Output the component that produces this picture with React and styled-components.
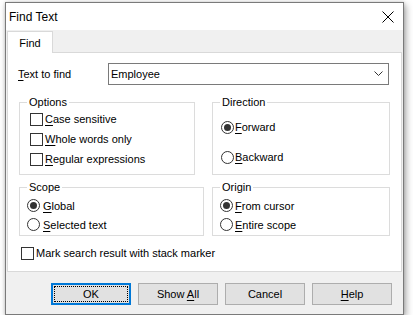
import React from 'react';
import styled, { createGlobalStyle } from 'styled-components';

const GlobalStyle = createGlobalStyle`
  html, body {
    margin: 0;
    padding: 0;
    background: #ffffff;
  }
  body {
    font-family: "Liberation Sans", Arial, sans-serif;
    font-size: 11px;
    color: #000;
  }
`;

const Window = styled.div`
  box-sizing: border-box;
  width: 399px;
  height: 313px;
  margin: 2px 0 0 5px;
  border: 1px solid #7a7a7a;
  background: #f0f0f0;
  box-shadow: 2px 3px 7px rgba(0, 0, 0, 0.35), 0 0 3px rgba(0, 0, 0, 0.15);
  display: flex;
  flex-direction: column;
`;

const TitleBar = styled.div`
  height: 27px;
  background: #ffffff;
  display: flex;
  align-items: center;
  justify-content: space-between;
  padding: 0 8px 0 3px;
  font-size: 12px;
`;

const CloseButton = styled.div`
  width: 12px;
  height: 12px;
  display: flex;
  margin-right: 1px;
`;

const Tabs = styled.div`
  display: flex;
  padding: 1px 1px 0 1px;
`;

const Tab = styled.div`
  box-sizing: border-box;
  width: 46px;
  height: 22px;
  margin-bottom: -1px;
  background: #ffffff;
  border: 1px solid #d9d9d9;
  border-bottom: none;
  display: flex;
  align-items: center;
  justify-content: center;
  padding-top: 1px;
  position: relative;
  z-index: 1;
`;

const Panel = styled.div`
  box-sizing: border-box;
  height: 220px;
  margin: 0 1px;
  background: #ffffff;
  border: 1px solid #d9d9d9;
  padding: 10px 0 0 10px;
  display: flex;
  flex-direction: column;
`;

const FindRow = styled.div`
  display: flex;
  align-items: center;
  height: 22px;
`;

const FieldLabel = styled.div`
  width: 90px;
`;

const Combo = styled.div`
  box-sizing: border-box;
  width: 281px;
  height: 22px;
  border: 1px solid #7a7a7a;
  display: flex;
  align-items: center;
  justify-content: space-between;
  padding: 0 5px 0 2px;
`;

const GroupRow = styled.div`
  display: flex;
  justify-content: space-between;
  width: 371px;
  margin: ${(p) => p.$top}px 0 0 1px;
`;

const Group = styled.fieldset`
  box-sizing: border-box;
  width: ${(p) => p.$width}px;
  margin: 0;
  padding: 0;
  border: 1px solid #dcdcdc;
  min-width: 0;
`;

const Legend = styled.legend`
  padding: 0 2px;
  margin-left: 7px;
  line-height: 14px;
  font-size: 11px;
`;

const GroupBody = styled.div`
  display: flex;
  flex-direction: column;
  padding: ${(p) => p.$pad};
`;

const Option = styled.label`
  display: flex;
  align-items: center;
  height: ${(p) => p.$h}px;
  gap: ${(p) => p.$gap}px;
`;

const CheckBox = styled.span`
  box-sizing: border-box;
  width: 13px;
  height: 13px;
  border: 1px solid #333333;
  background: #ffffff;
  flex-shrink: 0;
`;

const RadioDot = styled.span`
  box-sizing: border-box;
  width: 13px;
  height: 13px;
  border-radius: 50%;
  border: 1px solid #333333;
  background: #ffffff;
  flex-shrink: 0;
  display: flex;
  align-items: center;
  justify-content: center;

  &::after {
    content: '';
    width: 7px;
    height: 7px;
    border-radius: 50%;
    background: ${(p) => (p.$on ? '#333333' : 'transparent')};
  }
`;

const MarkRow = styled.div`
  margin: 7px 0 0 3px;
`;

const Key = styled.u`
  text-decoration-thickness: 1px;
  text-underline-offset: 2px;
`;

const ButtonBar = styled.div`
  display: flex;
  justify-content: flex-end;
  gap: 7px;
  padding: 11px 11px 0 0;
`;

const Button = styled.div`
  box-sizing: border-box;
  width: 80px;
  height: 22px;
  background: #e1e1e1;
  border: ${(p) => (p.$default ? '2px solid #0078d7' : '1px solid #adadad')};
  display: flex;
  align-items: center;
  justify-content: center;
  position: relative;

  &::after {
    content: '';
    display: ${(p) => (p.$default ? 'block' : 'none')};
    position: absolute;
    inset: 1px;
    border: 1px dotted #000;
  }
`;

const Chevron = () => (
  <svg width="9" height="6" viewBox="0 0 9 6">
    <path d="M0.5 0.5 L4.5 4.5 L8.5 0.5" fill="none" stroke="#333" strokeWidth="1" />
  </svg>
);

const CloseIcon = () => (
  <svg width="12" height="12" viewBox="0 0 12 12">
    <path d="M0.5 0.5 L11.5 11.5 M11.5 0.5 L0.5 11.5" stroke="#000" strokeWidth="1" />
  </svg>
);

const Check = ({ k, rest, h = 20, gap = 2 }) => (
  <Option $h={h} $gap={gap}>
    <CheckBox />
    <span>
      {k ? <Key>{k}</Key> : null}
      {rest}
    </span>
  </Option>
);

const Radio = ({ k, rest, on, h, gap = 2 }) => (
  <Option $h={h} $gap={gap}>
    <RadioDot $on={on} />
    <span>
      <Key>{k}</Key>
      {rest}
    </span>
  </Option>
);

export default function App() {
  return (
    <>
      <GlobalStyle />
      <Window>
        <TitleBar>
          <span>Find Text</span>
          <CloseButton>
            <CloseIcon />
          </CloseButton>
        </TitleBar>
        <Tabs>
          <Tab>Find</Tab>
        </Tabs>
        <Panel>
          <FindRow>
            <FieldLabel>
              <Key>T</Key>ext to find
            </FieldLabel>
            <Combo>
              <span>Employee</span>
              <Chevron />
            </Combo>
          </FindRow>

          <GroupRow $top={10}>
            <Group $width={176}>
              <Legend>Options</Legend>
              <GroupBody $pad="0 0 5px 10px">
                <Check k="C" rest="ase sensitive" />
                <Check k="W" rest="hole words only" />
                <Check k="R" rest="egular expressions" />
              </GroupBody>
            </Group>
            <Group $width={178}>
              <Legend>Direction</Legend>
              <GroupBody $pad="3px 0 0 8px">
                <Radio k="F" rest="orward" on h={30} gap={1} />
                <Radio k="B" rest="ackward" h={30} gap={1} />
              </GroupBody>
            </Group>
          </GroupRow>

          <GroupRow $top={5}>
            <Group $width={185}>
              <Legend>Scope</Legend>
              <GroupBody $pad="2px 0 1px 7px">
                <Radio k="G" rest="lobal" on h={19} gap={3} />
                <Radio k="S" rest="elected text" h={19} gap={3} />
              </GroupBody>
            </Group>
            <Group $width={178}>
              <Legend>Origin</Legend>
              <GroupBody $pad="2px 0 1px 7px">
                <Radio k="F" rest="rom cursor" on h={19} gap={2} />
                <Radio k="E" rest="ntire scope" h={19} gap={2} />
              </GroupBody>
            </Group>
          </GroupRow>

          <MarkRow>
            <Check rest="Mark search result with stack marker" gap={2} />
          </MarkRow>
        </Panel>
        <ButtonBar>
          <Button $default>OK</Button>
          <Button>
            <span>
              Show <Key>A</Key>ll
            </span>
          </Button>
          <Button>Cancel</Button>
          <Button>
            <span>
              <Key>H</Key>elp
            </span>
          </Button>
        </ButtonBar>
      </Window>
    </>
  );
}
